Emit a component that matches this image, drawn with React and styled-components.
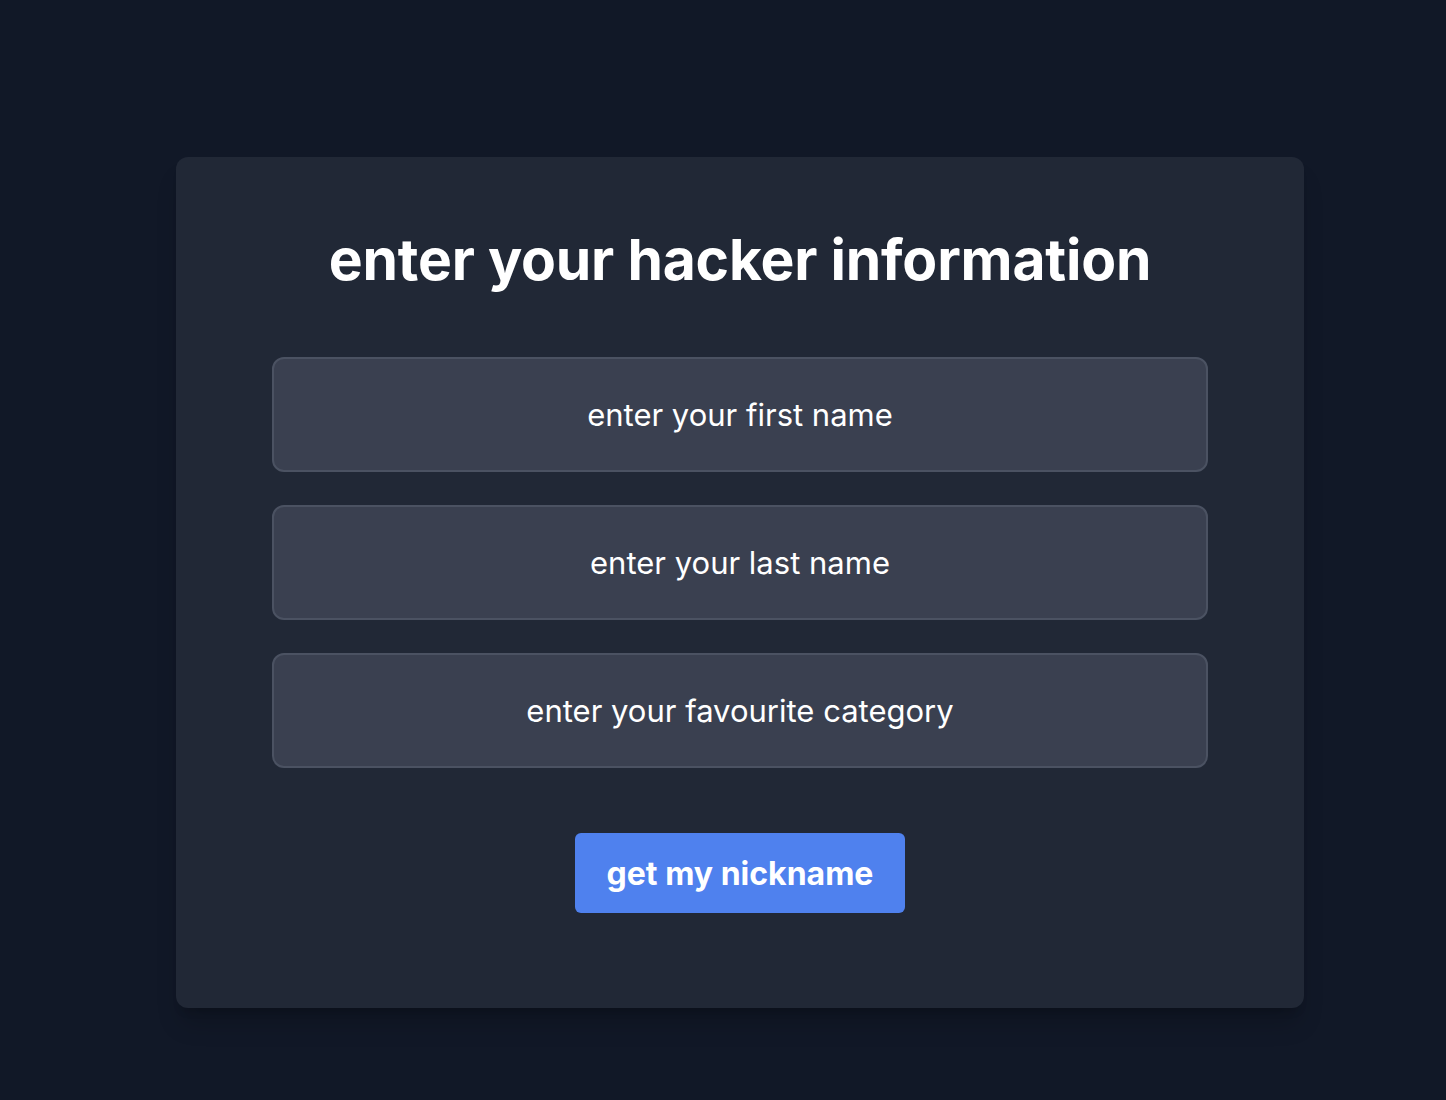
import React, { useState } from "react";
import styled, { createGlobalStyle } from "styled-components";

const GlobalStyle = createGlobalStyle`
  html, body {
    margin: 0;
    padding: 0;
    background: #111827;
  }
  body {
    font-family: Inter, "Noto Sans", "Liberation Sans", sans-serif;
    -webkit-font-smoothing: antialiased;
  }
`;

export default function App() {
  const [first, setFirst] = useState("");
  const [last, setLast] = useState("");
  const [category, setCategory] = useState("");

  return (
    <Page>
      <GlobalStyle />
      <Card>
        <Title>enter your hacker information</Title>
        <Fields>
          <Field
            type="text"
            placeholder="enter your first name"
            value={first}
            onChange={(e) => setFirst(e.target.value)}
          />
          <Field
            type="text"
            placeholder="enter your last name"
            value={last}
            onChange={(e) => setLast(e.target.value)}
          />
          <Field
            type="text"
            placeholder="enter your favourite category"
            value={category}
            onChange={(e) => setCategory(e.target.value)}
          />
        </Fields>
        <Submit>get my nickname</Submit>
      </Card>
    </Page>
  );
}

const Page = styled.div`
  min-height: 1100px;
  box-sizing: border-box;
  padding: 157px 0 0 176px;
`;

const Card = styled.div`
  width: 1128px;
  height: 851px;
  box-sizing: border-box;
  padding: 69px 96px 0;
  background: #212836;
  border-radius: 12px;
  box-shadow: 0 20px 25px -5px rgba(0, 0, 0, 0.18), 0 8px 10px -6px rgba(0, 0, 0, 0.18);
  display: flex;
  flex-direction: column;
  align-items: center;
`;

const Title = styled.h1`
  margin: 0 0 63px;
  font-size: 57px;
  line-height: 68px;
  font-weight: 700;
  letter-spacing: -0.2px;
  color: #ffffff;
  text-align: center;
`;

const Fields = styled.div`
  width: 100%;
  display: flex;
  flex-direction: column;
  gap: 33px;
`;

const Field = styled.input`
  box-sizing: border-box;
  width: 100%;
  height: 115px;
  background: #3a4050;
  border: 2px solid #4b5262;
  border-radius: 12px;
  color: #ffffff;
  font-family: Inter, "Noto Sans", sans-serif;
  font-size: 31px;
  text-align: center;
  outline: none;
  &::placeholder {
    color: #ffffff;
    opacity: 1;
  }
`;

const Submit = styled.button`
  margin-top: 65px;
  height: 80px;
  padding: 0 32px;
  background: #4f81ee;
  border: none;
  border-radius: 6px;
  color: #ffffff;
  font-family: Inter, "Noto Sans", sans-serif;
  font-size: 32px;
  font-weight: 700;
  cursor: pointer;
`;
